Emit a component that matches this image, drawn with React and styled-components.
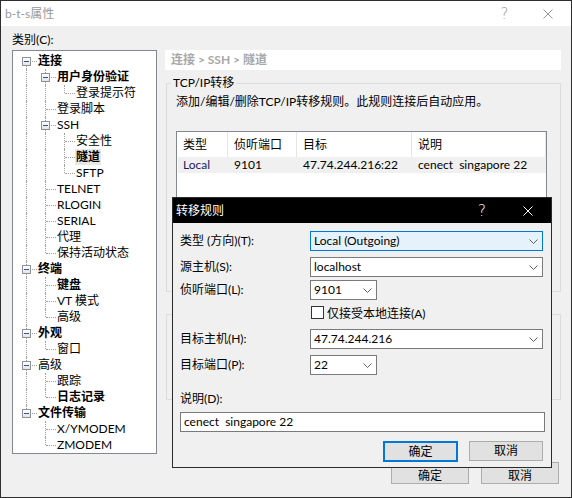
import React from 'react';
import styled, { createGlobalStyle } from 'styled-components';

const FONT = `"Lato", "Noto Sans CJK SC", sans-serif`;

const GlobalStyle = createGlobalStyle`
  html, body { margin: 0; padding: 0; background: #f0f0f0; }
  body { font-family: ${FONT}; font-size: 12px; color: #000; }
  * { box-sizing: border-box; }
`;

const tree = [
  { t: '连接', b: true, c: [
    { t: '用户身份验证', b: true, c: [{ t: '登录提示符' }] },
    { t: '登录脚本' },
    { t: 'SSH', c: [{ t: '安全性' }, { t: '隧道', b: true, sel: true }, { t: 'SFTP' }] },
    { t: 'TELNET' },
    { t: 'RLOGIN' },
    { t: 'SERIAL' },
    { t: '代理' },
    { t: '保持活动状态' },
  ] },
  { t: '终端', b: true, c: [{ t: '键盘', b: true }, { t: 'VT 模式' }, { t: '高级' }] },
  { t: '外观', b: true, c: [{ t: '窗口' }] },
  { t: '高级', c: [{ t: '跟踪' }, { t: '日志记录', b: true }] },
  { t: '文件传输', b: true, c: [{ t: 'X/YMODEM' }, { t: 'ZMODEM' }] },
];

function flatten(nodes, guides = [], out = []) {
  nodes.forEach((n, i) => {
    const last = i === nodes.length - 1;
    out.push({ ...n, guides, last, first: guides.length === 0 && i === 0 });
    if (n.c) flatten(n.c, [...guides, !last], out);
  });
  return out;
}

const Window = styled.div`
  position: relative;
  width: 572px;
  height: 498px;
  border: 1px solid #2e2e2e;
  background: #f0f0f0;
  overflow: hidden;
  display: flex;
  flex-direction: column;
`;

const TitleBar = styled.div`
  height: 25px;
  flex: none;
  display: flex;
  align-items: center;
  background: ${p => (p.$dark ? '#000' : '#fff')};
  color: ${p => (p.$dark ? '#fff' : '#999')};
  padding-left: ${p => (p.$dark ? 3 : 4)}px;
  padding-right: ${p => (p.$dark ? 0 : 2)}px;
`;

const TitleText = styled.div`
  flex: 1;
  font-size: 12px;
  line-height: 16px;
`;

const CapButton = styled.div`
  width: ${p => p.$w || 43}px;
  height: 100%;
  display: flex;
  align-items: center;
  justify-content: center;
  font-family: "DejaVu Sans", sans-serif;
  font-size: 15px;
  font-weight: 300;
`;

const Body = styled.div`
  flex: 1;
  display: flex;
  padding: 6px 10px 13px 11px;
`;

const LeftCol = styled.div`
  width: 145px;
  flex: none;
`;

const CatLabel = styled.div`
  height: 18px;
  line-height: 16px;
`;

const TreeBox = styled.div`
  height: 404px;
  background: #fff;
  border: 1px solid #828790;
  padding: 2px 0 0 4px;
`;

const TreeRow = styled.div`
  height: 16px;
  display: flex;
  align-items: stretch;
`;

const Guide = styled.div`
  position: relative;
  width: 19px;
  flex: none;
  &::before {
    content: '';
    display: ${p => (p.$on ? 'block' : 'none')};
    position: absolute;
    left: 9px;
    top: 0;
    bottom: 0;
    border-left: 1px dotted #a0a0a0;
  }
`;

const Joint = styled.div`
  position: relative;
  width: 19px;
  flex: none;
  &::before {
    content: '';
    position: absolute;
    left: 9px;
    top: ${p => (p.$first ? 8 : 0)}px;
    height: ${p => (p.$last ? 8 : 16) - (p.$first ? 8 : 0)}px;
    border-left: 1px dotted #a0a0a0;
  }
  &::after {
    content: '';
    position: absolute;
    left: 10px;
    right: -1px;
    top: 8px;
    border-top: 1px dotted #a0a0a0;
  }
`;

const Expander = styled.div`
  position: absolute;
  z-index: 1;
  left: 5px;
  top: 4px;
  width: 9px;
  height: 9px;
  border: 1px solid #919191;
  background: linear-gradient(#ffffff, #e4e4e4);
  &::after {
    content: '';
    position: absolute;
    left: 1px;
    top: 3px;
    width: 5px;
    height: 1px;
    background: #2b4fa8;
  }
`;

const TreeText = styled.div`
  margin-left: 1px;
  padding: 0 1px;
  line-height: 16px;
  white-space: nowrap;
  font-weight: ${p => (p.$bold ? 700 : 400)};
  background: ${p => (p.$sel ? '#e8e8e8' : 'transparent')};
`;

const RightCol = styled.div`
  width: 396px;
  margin-left: 8px;
  padding-top: 18px;
  display: flex;
  flex-direction: column;
`;

const Crumb = styled.div`
  height: 20px;
  line-height: 20px;
  background: #fff;
  padding-left: 6px;
  font-weight: 700;
  color: #a8a8a8;
`;

const Group = styled.fieldset`
  margin: ${p => p.$top}px 0 0 1px;
  width: 395px;
  height: ${p => p.$h}px;
  border: 1px solid #dcdcdc;
  padding: 0 0 0 9px;
  min-width: 0;
`;

const Legend = styled.legend`
  margin-left: -5px;
  padding: 0 2px;
  line-height: 16px;
`;

const Hint = styled.div`
  margin-top: 3px;
  line-height: 16px;
`;

const ListView = styled.div`
  margin-top: 21px;
  width: 371px;
  height: 124px;
  background: #fff;
  border: 1px solid #828790;
`;

const ListHead = styled.div`
  display: flex;
  height: 25px;
`;

const HeadCell = styled.div`
  width: ${p => p.$w}px;
  flex: none;
  padding: 2px 0 0 6px;
  line-height: 22px;
  border-right: 1px solid #e5e5e5;
  white-space: nowrap;
`;

const ListRow = styled.div`
  display: flex;
  height: 16px;
  margin-left: 1px;
  width: 368px;
  background: #f0f0f0;
`;

const Cell = styled.div`
  width: ${p => p.$w}px;
  flex: none;
  padding-left: ${p => p.$pad || 6}px;
  line-height: 16px;
  white-space: pre;
  color: ${p => p.$c || '#000'};
`;

const Footer = styled.div`
  margin-top: auto;
  display: flex;
  justify-content: flex-end;
  gap: 12px;
  padding-right: 2px;
`;

const Button = styled.div`
  width: ${p => p.$w || 78}px;
  height: ${p => p.$h || 22}px;
  display: flex;
  align-items: center;
  justify-content: center;
  padding-top: ${p => p.$pt || 0}px;
  background: #e1e1e1;
  border: ${p => (p.$focus ? '2px solid #0078d7' : '1px solid #adadad')};
  line-height: 16px;
`;

const Dialog = styled.div`
  position: absolute;
  left: 171px;
  top: 196px;
  width: 380px;
  height: 271px;
  border: 1px solid #2b2b2b;
  background: #f0f0f0;
  display: flex;
  flex-direction: column;
  z-index: 5;
`;

const DlgBody = styled.div`
  padding: 8px 6px 0 7px;
`;

const FormRow = styled.div`
  display: flex;
  align-items: center;
  margin-top: ${p => p.$mt || 0}px;
  height: 20px;
`;

const FieldLabel = styled.div`
  width: 130px;
  flex: none;
  line-height: 16px;
  white-space: nowrap;
`;

const Combo = styled.div`
  width: ${p => p.$w}px;
  height: 20px;
  display: flex;
  align-items: center;
  justify-content: space-between;
  padding: 0 4px 0 3px;
  background: ${p => (p.$focus ? '#e5f1fb' : '#fff')};
  border: 1px solid ${p => (p.$focus ? '#0078d7' : '#7a7a7a')};
  line-height: 16px;
`;

const Check = styled.div`
  width: 13px;
  height: 13px;
  margin: 0 3px 0 131px;
  border: 1px solid #333;
  background: #fff;
`;

const TextInput = styled.div`
  margin-top: 3px;
  width: 365px;
  height: 20px;
  padding-left: 3px;
  line-height: 18px;
  background: #fff;
  border: 1px solid #7a7a7a;
  white-space: pre;
`;

const DlgButtons = styled.div`
  margin-top: 9px;
  display: flex;
  justify-content: flex-end;
  align-items: flex-start;
  gap: 11px;
  padding-right: 2px;
`;

const Chevron = () => (
  <svg width="9" height="5" viewBox="0 0 9 5">
    <polyline points="0.5,0.5 4.5,4.5 8.5,0.5" fill="none" stroke="#606060" strokeWidth="1" />
  </svg>
);

const CloseIcon = ({ color }) => (
  <svg width="10" height="10" viewBox="0 0 10 10">
    <path d="M0.5 0.5 L9.5 9.5 M9.5 0.5 L0.5 9.5" stroke={color} strokeWidth="1" />
  </svg>
);

const cols = [51, 69, 115, 134];

export default function App() {
  const rows = flatten(tree);
  return (
    <>
      <GlobalStyle />
      <Window>
        <TitleBar>
          <TitleText>b-t-s属性</TitleText>
          <CapButton>?</CapButton>
          <CapButton><CloseIcon color="#999" /></CapButton>
        </TitleBar>
        <Body>
          <LeftCol>
            <CatLabel>类别(C):</CatLabel>
            <TreeBox>
              {rows.map((r, i) => (
                <TreeRow key={i}>
                  {r.guides.map((g, j) => <Guide key={j} $on={g} />)}
                  <Joint $first={r.first} $last={r.last}>
                    {r.c && <Expander />}
                  </Joint>
                  <TreeText $bold={r.b} $sel={r.sel}>{r.t}</TreeText>
                </TreeRow>
              ))}
            </TreeBox>
          </LeftCol>
          <RightCol>
            <Crumb>连接 &gt; SSH &gt; 隧道</Crumb>
            <Group $top={5} $h={217}>
              <Legend>TCP/IP转移</Legend>
              <Hint>添加/编辑/删除TCP/IP转移规则。此规则连接后自动应用。</Hint>
              <ListView>
                <ListHead>
                  {['类型', '侦听端口', '目标', '说明'].map((h, i) => (
                    <HeadCell key={h} $w={cols[i]}>{h}</HeadCell>
                  ))}
                </ListHead>
                <ListRow>
                  <Cell $w={50} $pad={5} $c="#1a1a5e">Local</Cell>
                  <Cell $w={69}>9101</Cell>
                  <Cell $w={115}>47.74.244.216:22</Cell>
                  <Cell $w={134}>cenect  singapore 22</Cell>
                </ListRow>
              </ListView>
            </Group>
            <Group $top={22} $h={86} />
            <Footer>
              <Button $pt={6}>确定</Button>
              <Button $pt={6}>取消</Button>
            </Footer>
          </RightCol>
        </Body>

        <Dialog>
          <TitleBar $dark>
            <TitleText>转移规则</TitleText>
            <CapButton $w={46}>?</CapButton>
            <CapButton $w={46}><CloseIcon color="#fff" /></CapButton>
          </TitleBar>
          <DlgBody>
            <FormRow>
              <FieldLabel>类型 (方向)(T):</FieldLabel>
              <Combo $w={233} $focus>Local (Outgoing)<Chevron /></Combo>
            </FormRow>
            <FormRow $mt={6}>
              <FieldLabel>源主机(S):</FieldLabel>
              <Combo $w={233}>localhost<Chevron /></Combo>
            </FormRow>
            <FormRow $mt={3}>
              <FieldLabel>侦听端口(L):</FieldLabel>
              <Combo $w={67}>9101<Chevron /></Combo>
            </FormRow>
            <FormRow $mt={2}>
              <Check />
              <span>仅接受本地连接(A)</span>
            </FormRow>
            <FormRow $mt={7}>
              <FieldLabel>目标主机(H):</FieldLabel>
              <Combo $w={233}>47.74.244.216<Chevron /></Combo>
            </FormRow>
            <FormRow $mt={6}>
              <FieldLabel>目标端口(P):</FieldLabel>
              <Combo $w={67}>22<Chevron /></Combo>
            </FormRow>
            <FormRow $mt={14}>
              <FieldLabel>说明(D):</FieldLabel>
            </FormRow>
            <TextInput>cenect  singapore 22</TextInput>
            <DlgButtons>
              <Button $w={75} $h={21} $focus>确定</Button>
              <Button $w={74} $h={20}>取消</Button>
            </DlgButtons>
          </DlgBody>
        </Dialog>
      </Window>
    </>
  );
}
